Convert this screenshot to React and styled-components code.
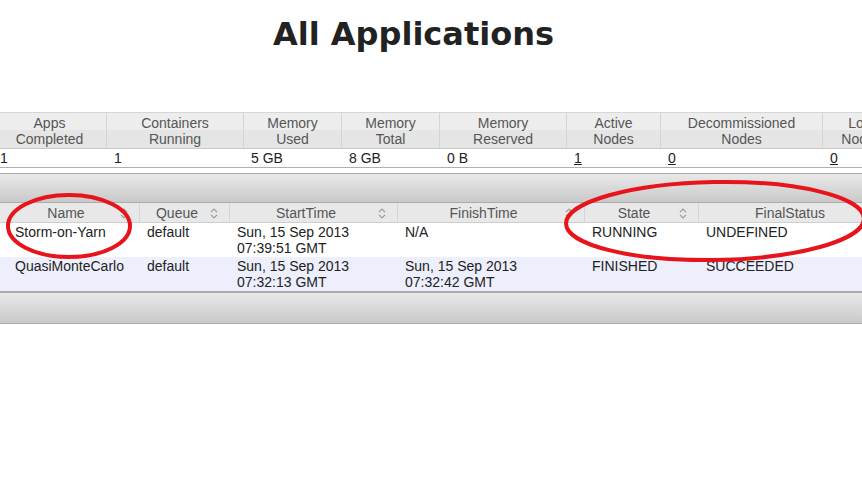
import React from "react";
import styled, { createGlobalStyle } from "styled-components";

const GlobalStyle = createGlobalStyle`
  html, body {
    margin: 0;
    padding: 0;
    background: #fff;
    overflow: hidden;
  }
  #root {
    width: 862px;
    height: 480px;
    overflow: hidden;
    position: relative;
  }
`;

const Page = styled.div`
  width: 862px;
  font-family: "Liberation Sans", Arial, sans-serif;
  font-size: 14px;
  color: #222;
`;

const Title = styled.h1`
  margin: 0;
  padding: 15px 35px 0 0;
  text-align: center;
  font-family: "DejaVu Sans", Verdana, sans-serif;
  font-weight: bold;
  font-size: 32px;
  line-height: 38px;
  color: #222;
`;

const MetricsTable = styled.div`
  display: grid;
  grid-template-columns: 114px 137px 98px 98px 127px 94px 162px 78px;
  margin: 59px 0 0 -7px;
  width: 908px;
  border-top: 1px solid #d6d6d6;
`;

const MetricHead = styled.div`
  background: linear-gradient(#ededed 50%, #e5e5e5 50%);
  border-right: 1px solid #d4d4d4;
  border-bottom: 1px solid #c8c8c8;
  padding: 2px 2px 1px;
  line-height: 16px;
  text-align: center;
  white-space: nowrap;
  color: #555;
`;

const MetricCell = styled.div`
  padding: 0 7px;
  height: 18px;
  line-height: 18px;
  border-bottom: 1px solid #b0b0b0;
`;

const NodeLink = styled.span`
  text-decoration: underline;
  color: #222;
`;

const Toolbar = styled.div`
  height: ${(p) => p.$height}px;
  background: linear-gradient(#e9e9e9, #c9c9c9);
  border-top: 1px solid #ababab;
  border-bottom: 1px solid #ababab;
  margin-top: ${(p) => p.$top || 0}px;
`;

const AppsTable = styled.div`
  display: grid;
  grid-template-columns: 8px 132px 90px 168px 187px 114px 198px;
  width: 897px;
`;

const AppHead = styled.div`
  position: relative;
  background: #e8e8e8;
  border-right: 1px solid #d6d6d6;
  border-bottom: 1px solid #cfcfcf;
  padding: 2px 22px 1px 7px;
  line-height: 16px;
  text-align: center;
  color: #555;
`;

const SortIcon = styled.svg`
  position: absolute;
  right: 11px;
  top: 5px;
`;

const AppCell = styled.div`
  padding: 1px 7px;
  line-height: 16px;
  height: 32px;
  white-space: nowrap;
  background: ${(p) => (p.$alt ? "#eeeffd" : "#fff")};
  border-bottom: ${(p) => (p.$last ? "1px solid #ababab" : "none")};
`;

const Annotations = styled.svg`
  position: absolute;
  left: 0;
  top: 0;
  pointer-events: none;
`;

const metricHeads = [
  "Apps Completed",
  "Containers Running",
  "Memory Used",
  "Memory Total",
  "Memory Reserved",
  "Active Nodes",
  "Decommissioned Nodes",
  "Lost Nodes",
];

const metricValues = ["1", "1", "5 GB", "8 GB", "0 B", "1", "0", "0"];

const appHeads = [
  { label: "", sort: false },
  { label: "Name", sort: true },
  { label: "Queue", sort: true },
  { label: "StartTime", sort: true },
  { label: "FinishTime", sort: true },
  { label: "State", sort: true },
  { label: "FinalStatus", sort: false },
];

const apps = [
  ["", "Storm-on-Yarn", "default", "Sun, 15 Sep 2013 07:39:51 GMT", "N/A", "RUNNING", "UNDEFINED"],
  ["", "QuasiMonteCarlo", "default", "Sun, 15 Sep 2013 07:32:13 GMT", "Sun, 15 Sep 2013 07:32:42 GMT", "FINISHED", "SUCCEEDED"],
];

function Sort() {
  return (
    <SortIcon width="8" height="11" viewBox="0 0 8 11">
      <path d="M1 4.2 L4 1.2 L7 4.2 M1 6.8 L4 9.8 L7 6.8" fill="none" stroke="#9a9a9a" strokeWidth="1.2" />
    </SortIcon>
  );
}

export default function App() {
  return (
    <Page>
      <GlobalStyle />
      <Title>All Applications</Title>

      <MetricsTable>
        {metricHeads.map((h) => {
          const [a, b] = h.split(" ");
          return (
            <MetricHead key={h}>
              {a}
              <br />
              {b}
            </MetricHead>
          );
        })}
        {metricValues.map((v, i) => (
          <MetricCell key={i}>{i >= 5 ? <NodeLink>{v}</NodeLink> : v}</MetricCell>
        ))}
      </MetricsTable>

      <Toolbar $top={5} $height={28} />
      <AppsTable>
        {appHeads.map((h, i) => (
          <AppHead key={i}>
            {h.label}
            {h.sort && <Sort />}
          </AppHead>
        ))}
        {apps.map((row, r) =>
          row.map((c, i) => (
            <AppCell key={r + "-" + i} $alt={r === 1} $last={r === apps.length - 1}>
              {c.includes("GMT") ? (
                <>
                  {c.slice(0, 16)}
                  <br />
                  {c.slice(17)}
                </>
              ) : (
                c
              )}
            </AppCell>
          ))
        )}
      </AppsTable>
      <Toolbar $height={30} />

      <Annotations width="862" height="480">
        <ellipse cx="69" cy="226" rx="61" ry="31" fill="none" stroke="#e8141c" strokeWidth="4" />
        <ellipse cx="715" cy="221" rx="149" ry="39" fill="none" stroke="#e8141c" strokeWidth="4" transform="rotate(-1 715 221)" />
      </Annotations>
    </Page>
  );
}
